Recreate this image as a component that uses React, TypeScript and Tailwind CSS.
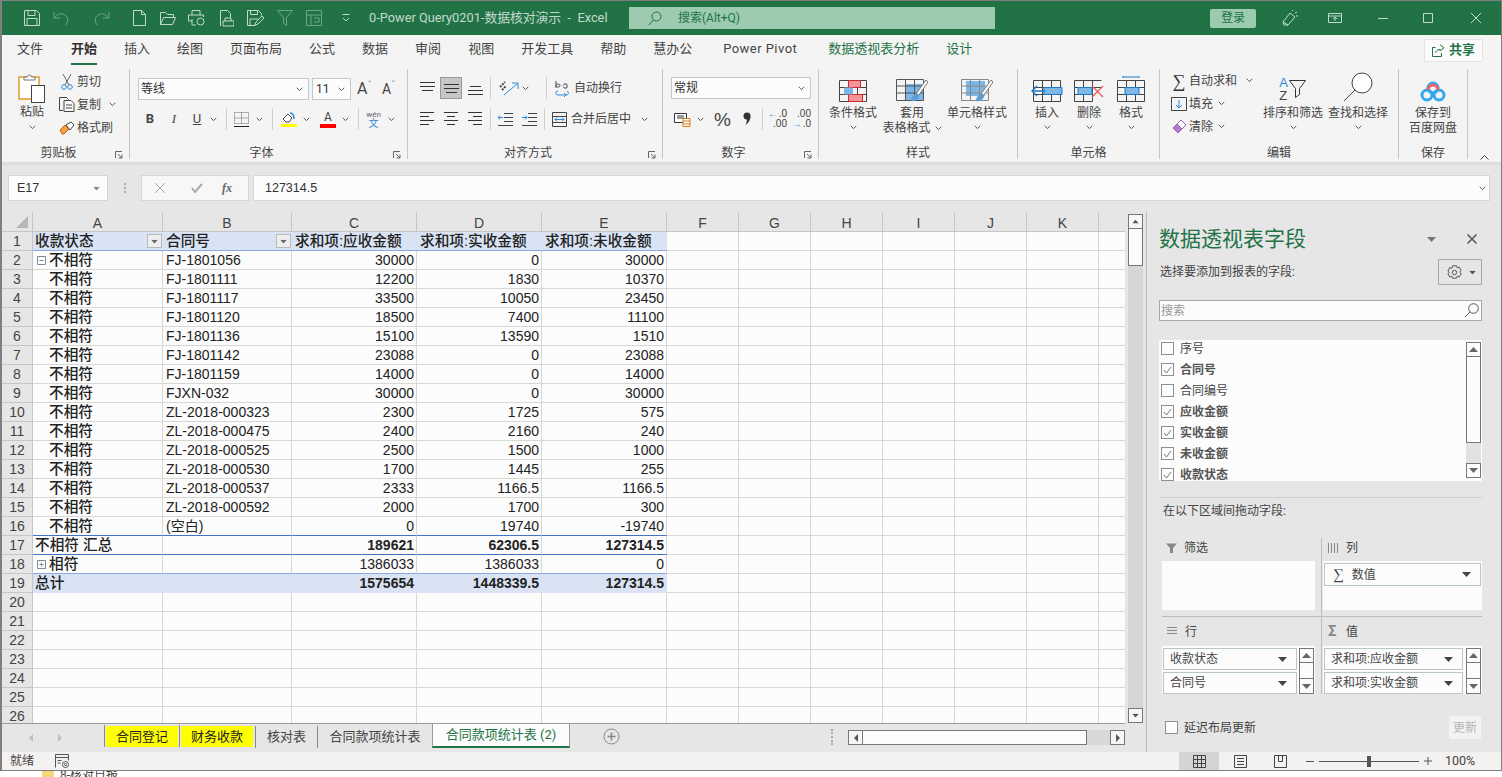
import React from 'react'

const Icon = ({ w, h, className = '', children }: { w: number; h: number; className?: string; children: React.ReactNode }) => (
  <svg width={w} height={h} viewBox={`0 0 ${w} ${h}`} fill="none" stroke="currentColor" strokeWidth="1" className={`shrink-0 ${className}`}>
    {children}
  </svg>
)

const Chev = ({ className = '' }: { className?: string }) => (
  <Icon w={7} h={5} className={`text-[#555] ${className}`}>
    <path d="M.7.8l2.8 2.8L6.3.8" />
  </Icon>
)

const Tri = ({ className = '' }: { className?: string }) => (
  <svg width="9" height="5" viewBox="0 0 9 5" className={`shrink-0 ${className}`}>
    <path d="M0 0h9L4.5 5z" fill="currentColor" />
  </svg>
)

/* ---------- title bar ---------- */

const TitleBar = () => (
  <div className="h-[34px] bg-[#217346] flex items-center text-[#c3d9cd] shrink-0">
    <Icon w={16} h={16} className="ml-[22px]"><path d="M.5.5h12l3 3v12H.5zM4 .5v5h7v-5M3 15.5v-7h10v7" /></Icon>
    <Icon w={17} h={15} className="ml-[13px] text-[#6ea58a]"><path d="M1 1v6h6M1.5 7C4 3 8 2 11 3.500c4 2 5 6 2 10.500" /></Icon>
    <Chev className="ml-[7px] text-[#6ea58a]" />
    <Icon w={17} h={15} className="ml-[9px] text-[#6ea58a]"><path d="M16 1v6h-6M15.500 7C13 3 9 2 6 3.500c-4 2-5 6-2 10.500" /></Icon>
    <Chev className="ml-[6px] text-[#6ea58a]" />
    <Icon w={13} h={16} className="ml-[10px]"><path d="M.5.500h8l4 4v11H.5zM8.500.500v4h4" /></Icon>
    <Icon w={16} h={13} className="ml-[14px]"><path d="M.5 12.500V.5h5l2 2h6v3M.5 12.500l3-7h12l-3 7z" /></Icon>
    <Icon w={17} h={16} className="ml-[12px]"><path d="M4 5V.5h8V5M4 11H.5V5h15v2M4 9v6h4" /><circle cx="12.500" cy="11.500" r="3.500" /></Icon>
    <Icon w={14} h={17} className="ml-[15px]"><path d="M.5 16V.5h7l3 3v4M3 16h11v-5H3zM5 11V8h6v3" /></Icon>
    <Icon w={17} h={16} className="ml-[13px]"><path d="M.5.500h11l3 3v2M.5.500v15h8M3.500.500v4h7v-4M3 15V9h8M8 15l1-3 6-6 2 2-6 6z" /></Icon>
    <Icon w={16} h={16} className="ml-[13px] text-[#6ea58a]"><path d="M.5.500h15l-6 7v8l-3-2v-6z" /></Icon>
    <Icon w={16} h={16} className="ml-[13px] text-[#6ea58a]"><path d="M.5.500h15v15H.5zM.5 5h15M5 5v10.500M8 8h5v4M8 12h5" /></Icon>
    <Icon w={8} h={8} className="ml-[20px]"><path d="M.5.500h7M1 4l3 3 3-3" /></Icon>
    <span className="ml-[19px] w-[260px] text-[12.800px] whitespace-nowrap">0-Power Query0201-数据核对演示&nbsp;&nbsp;-&nbsp;&nbsp;Excel</span>
    <div className="w-[366px] h-[22px] bg-[#9ccbb0] flex items-center text-[#217346]">
      <Icon w={14} h={15} className="ml-[19px]"><circle cx="8.500" cy="5.500" r="4.500" /><path d="M5.500 9L.8 14" /></Icon>
      <span className="ml-[16px] text-[12px]">搜索(Alt+Q)</span>
    </div>
    <div className="ml-[215px] w-[46px] h-[19px] rounded-[2px] bg-[#9ccbb0] text-[#217346] text-[12px] flex items-center justify-center">登录</div>
    <Icon w={16} h={16} className="ml-[26px]"><path d="M1 12L8 3l5 4-7 8zM1 12l1 3 4 0M10 1l1-1M13 3l2-1M14 6h2" /></Icon>
    <Icon w={14} h={10} className="ml-[30px]"><path d="M.5.500h13v9H.5zM.5 3h13M7 8V4.500M5 6l2-2 2 2" /></Icon>
    <Icon w={10} h={1} className="ml-[36px]"><path d="M0 .5h10" /></Icon>
    <Icon w={10} h={10} className="ml-[35px]"><path d="M.5.500h9v9h-9z" /></Icon>
    <Icon w={10} h={10} className="ml-[38px]"><path d="M0 0l10 10M10 0L0 10" /></Icon>
  </div>
)

/* ---------- ribbon tabs ---------- */

const tabs = ['文件', '开始', '插入', '绘图', '页面布局', '公式', '数据', '审阅', '视图', '开发工具', '帮助', '慧办公']

const MenuTabs = () => (
  <div className="h-[30px] bg-[#f5f4f4] flex items-center pl-[15px] pb-[2px] gap-[27px] text-[13px] text-[#444] shrink-0 relative">
    {tabs.map((t) => (
      <span key={t} className={t === '开始' ? 'relative font-bold text-[#333] ml-[1px]' : ''}>
        {t}
        {t === '开始' && <span className="absolute left-0 right-0 -bottom-[6px] h-[2px] bg-[#217346]" />}
      </span>
    ))}
    <span className="mx-[4px] tracking-[0.45px]">Power Pivot</span>
    <span className="text-[#217346]">数据透视表分析</span>
    <span className="text-[#217346]">设计</span>
    <div className="ml-auto mr-[18px] mt-[2px] w-[59px] h-[23px] bg-[#fbfbfb] border border-[#e3e3e3] rounded-[2px] flex items-center justify-center gap-[4px] text-[#217346] font-bold">
      <Icon w={13} h={13}><path d="M8 .8l4 3-4 3V5.500C5 5.500 4 7 3.500 9M.5 3.500h3M.5 3.500v9h9V9" /></Icon>
      <span>共享</span>
    </div>
  </div>
)

/* ---------- ribbon groups ---------- */

const Launcher = () => (
  <Icon w={8} h={8} className="text-[#666]"><path d="M.5 7V.5H7M3 3l4 4M7 3.500V7H3.500" /></Icon>
)

const Group = ({ w, label, launcher, children }: { w: string; label: string; launcher?: boolean; children: React.ReactNode }) => (
  <div className={`${w} h-[90px] mt-[4px] border-r border-[#c6c6c6] flex flex-col shrink-0`}>
    <div className="h-[76px] flex">{children}</div>
    <div className="h-[14px] flex items-center text-[12px] text-[#444] pt-[2px]">
      <span className="flex-1 text-center">{label}</span>
      {launcher && <span className="w-[14px] flex pt-[4px]"><Launcher /></span>}
    </div>
  </div>
)

const BigBtn = ({ w, icon, lines, chevRight }: { w: string; icon: React.ReactNode; lines: string[]; chevRight?: boolean }) => (
  <div className={`${w} flex flex-col items-center text-[12px] text-[#444] shrink-0`}>
    <div className="h-[37px] flex items-end pb-[4px] pt-[4px]">{icon}</div>
    {lines.map((l, i) => (
      <div key={l} className="h-[15px] leading-[15px] whitespace-nowrap flex items-center">
        {l}
        {chevRight && i === lines.length - 1 && <Chev className="ml-[4px]" />}
      </div>
    ))}
    {!chevRight && lines.length === 1 && <Chev className="mt-[4px]" />}
  </div>
)

const Sep = ({ className = '' }: { className?: string }) => <span className={`w-px h-[22px] bg-[#d0d0d0] shrink-0 ${className}`} />

const Select = ({ w, text }: { w: string; text: string }) => (
  <div className={`${w} h-[22px] bg-[#fcfcfc] border border-[#c2c8cb] flex items-center justify-between pl-[2px] pr-[5px] text-[12px] text-[#333] shrink-0`}>
    <span>{text}</span>
    <Chev />
  </div>
)

const SmallRow = ({ icon, text, chev, chevMl = 'ml-[8px]' }: { icon: React.ReactNode; text: string; chev?: boolean; chevMl?: string }) => (
  <div className="h-[23px] flex items-center text-[12px] text-[#444]">
    <span className="w-[18px] flex justify-center shrink-0">{icon}</span>
    <span className="ml-[1px] whitespace-nowrap">{text}</span>
    {chev && <Chev className={chevMl} />}
  </div>
)

const Lines = ({ v }: { v: 'top' | 'mid' | 'bot' | 'left' | 'center' | 'right' }) => {
  const d = {
    top: 'M0 1.500h15M0 5.500h15M2 9.500h11',
    mid: 'M0 3.500h15M0 7.500h15M2 11.500h11',
    bot: 'M2 5.500h11M0 9.500h15M0 13.500h15',
    left: 'M0 .5h14M0 4.500h9M0 8.500h14M0 12.500h9',
    center: 'M0 .5h14M3 4.500h8M0 8.500h14M3 12.500h8',
    right: 'M0 .5h14M5 4.500h9M0 8.500h14M5 12.500h9',
  }[v]
  return <Icon w={15} h={15} className="text-[#333]"><path d={d} /></Icon>
}

const Ribbon = () => (
  <div className="h-[97px] bg-[#f5f4f4] flex shrink-0 relative">
    {/* clipboard */}
    <Group w="w-[128px]" label="剪贴板" launcher>
      <div className="w-[50px] ml-[5px] flex flex-col items-center text-[12px] text-[#444] shrink-0">
        <svg width="28" height="30" viewBox="0 0 28 30" fill="none" className="mt-[4px]">
          <rect x="1" y="4" width="20" height="22" fill="#fff" stroke="#e39a2d" strokeWidth="1.500" />
          <path d="M6 7V4h3.500a2 2 0 0 1 4 0H17v3z" fill="#fff" stroke="#777" />
          <rect x="13.500" y="12.500" width="13" height="17" fill="#fff" stroke="#444" />
        </svg>
        <span className="mt-[2px] leading-[15px] h-[15px]">粘贴</span>
        <Chev className="mt-[5px]" />
      </div>
      <div className="ml-[1px] flex flex-col pt-[1px]">
        <SmallRow text="剪切" icon={
          <svg width="12" height="17" viewBox="0 0 12 17" fill="none"><path d="M2 1l6 11M10 1L4 12" stroke="#666" /><circle cx="3" cy="14" r="2.300" stroke="#2b88d8" /><circle cx="9" cy="14" r="2.300" stroke="#2b88d8" /></svg>
        } />
        <SmallRow text="复制" chev chevMl="ml-[8px]" icon={
          <svg width="16" height="15" viewBox="0 0 16 15" fill="none"><path d="M4 13.500H.5V.5h7l2 2" stroke="#444" /><path d="M5 3.500h7l3 3v8H5zM7 8h6M7 11h6" fill="#fbfbfb" stroke="#444" /></svg>
        } />
        <SmallRow text="格式刷" icon={
          <svg width="16" height="14" viewBox="0 0 16 14" fill="none"><path d="M1 9l5-5 4 4-5 5H3z" fill="#f0a04b" stroke="#c8650c" /><path d="M7 4l5-3 3 3-4 5z" fill="#fff" stroke="#444" /></svg>
        } />
      </div>
    </Group>

    {/* font */}
    <Group w="w-[278px]" label="字体" launcher>
      <div className="flex flex-col pt-[9px] pl-[8px]">
        <div className="flex items-center">
          <Select w="w-[171px]" text="等线" />
          <div className="w-[39px] h-[22px] ml-[3px] bg-[#fcfcfc] border border-[#c2c8cb] flex items-center justify-between pl-[3px] pr-[5px] text-[12px] text-[#333]">11<Chev /></div>
          <span className="ml-[6px] w-[18px] text-[16px] leading-[22px] text-[#444] flex">A<span className="text-[9px] leading-[14px] text-[#2b88d8]">ˆ</span></span>
          <span className="ml-[7px] w-[16px] text-[14px] leading-[22px] text-[#444] flex">A<span className="text-[9px] leading-[14px] text-[#2b88d8]">ˇ</span></span>
        </div>
        <div className="mt-[8px] h-[22px] flex items-center text-[#444] text-[13px]">
          <b className="ml-[7px] w-[10px] text-center">B</b>
          <i className="ml-[14px] w-[10px] text-center font-['Liberation_Serif',serif]">I</i>
          <u className="ml-[13px] w-[10px] text-center">U</u>
          <Chev className="ml-[8px]" />
          <Sep className="ml-[9px]" />
          <svg width="15" height="15" viewBox="0 0 15 15" fill="none" className="ml-[7px] shrink-0"><path d="M.5.500h14v11H.5zM7.500.500v11M.5 6h14" stroke="#666" strokeDasharray="1 1" /><path d="M0 14.500h15" stroke="#222" /></svg>
          <Chev className="ml-[7px]" />
          <Sep className="ml-[9px]" />
          <svg width="16" height="16" viewBox="0 0 16 16" fill="none" className="ml-[8px] shrink-0"><path d="M2 8l5-5 4 4-3 4H5z" stroke="#444" fill="#fff" /><path d="M9 2c3 0 4 3 4 6" stroke="#2b88d8" strokeWidth="1.500" /><path d="M0 13h16v3H0z" fill="#ffff00" /></svg>
          <Chev className="ml-[6px]" />
          <span className="ml-[10px] w-[16px] flex flex-col items-center text-[12px] leading-[12px]">A<span className="w-[16px] h-[4px] mt-[1px] bg-[#ff0000]" /></span>
          <Chev className="ml-[6px]" />
          <Sep className="ml-[9px]" />
          <span className="ml-[8px] w-[13px] flex flex-col items-center leading-[9px] text-[8px] text-[#666]">wén<span className="text-[10px] text-[#2b88d8]">文</span></span>
          <Chev className="ml-[8px]" />
        </div>
      </div>
    </Group>

    {/* alignment */}
    <Group w="w-[255px]" label="对齐方式" launcher>
      <div className="flex flex-col pt-[8px] pl-[12px]">
        <div className="h-[22px] flex items-center">
          <Lines v="top" />
          <span className="ml-[5px] w-[22px] h-[22px] bg-[#c6c6c6] border border-[#999] flex items-center justify-center"><Lines v="mid" /></span>
          <span className="ml-[6px] flex"><Lines v="bot" /></span>
          <Sep className="ml-[7px]" />
          <svg width="22" height="18" viewBox="0 0 22 18" fill="none" className="ml-[7px] shrink-0"><path d="M2 8l5-5M4 11l4-4" stroke="#444" strokeWidth="2" strokeDasharray="2 1" /><path d="M6 16l13-11M14 4h6v6" stroke="#2b88d8" /></svg>
          <Chev className="ml-[2px]" />
          <Sep className="ml-[17px]" />
          <svg width="18" height="17" viewBox="0 0 18 17" fill="none" className="ml-[8px] shrink-0"><path d="M1 1v7M1 5.500c1-2 4-2 4 0s-3 2-4 0M8 5.500c1-2 3-2 4-1v3c-1 1-3 1-4-1" stroke="#444" /><path d="M3 11c-3 0-3 4 0 4h8c3 0 3-3 1-4M9 13l2 2-2 2" stroke="#2b88d8" /></svg>
          <span className="ml-[1px] text-[12px] text-[#444] whitespace-nowrap">自动换行</span>
        </div>
        <div className="mt-[9px] h-[22px] flex items-center">
          <Lines v="left" />
          <span className="ml-[9px] flex"><Lines v="center" /></span>
          <span className="ml-[9px] flex"><Lines v="right" /></span>
          <Sep className="ml-[7px]" />
          <svg width="15" height="13" viewBox="0 0 15 13" fill="none" className="ml-[7px] shrink-0"><path d="M6 .5h9M6 4.500h9M6 8.500h9M0 12.500h15M0 .5h0" stroke="#444" /><path d="M5 4.500H0M2 2.500l-2 2 2 2" stroke="#2b88d8" /></svg>
          <svg width="15" height="13" viewBox="0 0 15 13" fill="none" className="ml-[9px] shrink-0"><path d="M6 .5h9M6 4.500h9M6 8.500h9M0 12.500h15" stroke="#444" /><path d="M0 4.500h5M3 2.500l2 2-2 2" stroke="#2b88d8" /></svg>
          <Sep className="ml-[7px]" />
          <svg width="15" height="15" viewBox="0 0 15 15" fill="none" className="ml-[7px] shrink-0"><path d="M.5.500h14v14H.5z" stroke="#444" /><path d="M.5 4.500h14M.5 10.500h14" stroke="#444" /><path d="M3 7.500h9M5 5.500l-2 2 2 2M10 5.500l2 2-2 2" stroke="#2b88d8" /></svg>
          <span className="ml-[4px] text-[12px] text-[#444] whitespace-nowrap">合并后居中</span>
          <Chev className="ml-[10px]" />
        </div>
      </div>
    </Group>

    {/* number */}
    <Group w="w-[156px]" label="数字" launcher>
      <div className="flex flex-col pt-[8px] pl-[8px]">
        <Select w="w-[140px]" text="常规" />
        <div className="mt-[9px] h-[22px] flex items-center text-[#444]">
          <svg width="17" height="15" viewBox="0 0 17 15" fill="none" className="ml-[3px] shrink-0"><path d="M.5 1.500h12v9H.5z" stroke="#333" fill="#fff" /><path d="M3 6h7M3 4h7" stroke="#333" /><path d="M9 6.500h7v8H9zM9 9h7M9 12h7" fill="#fff" stroke="#d67b1c" /></svg>
          <Chev className="ml-[6px]" />
          <span className="ml-[10px] text-[19px] leading-none w-[17px] font-['Liberation_Sans',sans-serif]">%</span>
          <svg width="8" height="14" viewBox="0 0 8 14" className="ml-[12px] shrink-0"><circle cx="4" cy="4" r="3.500" fill="#333" /><path d="M7.500 4c0 4-2 7-5 9 1-3 2-5 1-6z" fill="#333" /></svg>
          <Sep className="ml-[11px]" />
          <span className="ml-[7px] w-[17px] flex flex-col text-[10px] leading-[10px] font-['Liberation_Sans',sans-serif] items-end"><span className="flex items-center text-[#333]"><span className="text-[#2b88d8] mr-[1px] font-bold">←</span>.0</span><span>.00</span></span>
          <span className="ml-[7px] w-[17px] flex flex-col text-[10px] leading-[10px] font-['Liberation_Sans',sans-serif] items-end"><span>.00</span><span className="flex items-center"><span className="text-[#2b88d8] mr-[1px] font-bold">→</span>.0</span></span>
        </div>
      </div>
    </Group>

    {/* styles */}
    <Group w="w-[199px]" label="样式">
      <BigBtn w="w-[60px] ml-[4px]" lines={['条件格式']} icon={
        <svg width="28" height="22" viewBox="0 0 28 22" fill="none" className="shrink-0">
          <path d="M.5.500h27v21H.5zM.5 7.500h27M.5 14.500h27M9.500.500v21M18.500.500v21" stroke="#444" />
          <path d="M9.500.500h12v7h-12zM9.500 14.500h14v7h-14z" fill="#f7939b" stroke="#c92a2a" />
          <path d="M5 7.500h9v7H5z" fill="#7db7e8" />
        </svg>
      } />
      <BigBtn w="w-[60px] -ml-[1px]" chevRight lines={['套用', '表格格式']} icon={
        <svg width="32" height="24" viewBox="0 0 32 24" fill="none" className="shrink-0">
          <path d="M10 6h18v16H10z" fill="#7db7e8" />
          <path d="M.5 1.500h27v21H.5zM.5 8h27M.5 15h27M9.500 1.500v21M18.500 1.500v21" stroke="#555" />
          <path d="M20 16l10-14 2 2-9 13z" fill="#fff" stroke="#777" />
          <path d="M15 23c0-4 3-7 6-6l2 1c0 3-4 6-8 5z" fill="#5d9fd6" />
        </svg>
      } />
      <BigBtn w="w-[72px] -ml-[1px]" lines={['单元格样式']} icon={
        <svg width="32" height="24" viewBox="0 0 32 24" fill="none" className="shrink-0">
          <path d="M5 3h19v15H5z" fill="#7db7e8" />
          <path d="M.5 1.500h27v21H.5zM.5 8h27M.5 15h27M9.500 1.500v21M18.500 1.500v21" stroke="#888" />
          <path d="M20 16l10-14 2 2-9 13z" fill="#fff" stroke="#777" />
          <path d="M15 23c0-4 3-7 6-6l2 1c0 3-4 6-8 5z" fill="#5d9fd6" />
        </svg>
      } />
    </Group>

    {/* cells */}
    <Group w="w-[142px]" label="单元格">
      <BigBtn w="w-[42px] ml-[8px]" lines={['插入']} icon={
        <svg width="32" height="22" viewBox="0 0 32 22" fill="none" className="shrink-0">
          <path d="M2.500.5h27v21h-27zM2.500 7.500h27M2.500 14.500h27M11.500.5v21M20.500.5v21" stroke="#444" />
          <path d="M13 7.500h18v7H13z" fill="#7db7e8" stroke="#1f7ac8" />
          <path d="M1 11h13M6 6l-5 5 5 5" stroke="#1f7ac8" strokeWidth="1.500" fill="none" />
        </svg>
      } />
      <BigBtn w="w-[42px]" lines={['删除']} icon={
        <svg width="30" height="22" viewBox="0 0 30 22" fill="none" className="shrink-0">
          <path d="M.5.5h27M.5 21.500h18M.5 7.500h27M.5 14.500h18M.5.5v21M9.500.5v21M18.500.5v21" stroke="#444" />
          <path d="M4 7.500h14v7H4z" fill="#7db7e8" stroke="#1f7ac8" />
          <path d="M18 6l11 11M29 6L18 17" stroke="#ee5a5a" strokeWidth="1.300" />
        </svg>
      } />
      <BigBtn w="w-[42px]" lines={['格式']} icon={
        <svg width="28" height="26" viewBox="0 0 28 26" fill="none" className="shrink-0 -mt-[4px]">
          <path d="M6 1h16M6 0v2M22 0v2" stroke="#1f7ac8" />
          <path d="M.5 4.500h27v21H.5zM.5 11.500h27M.5 18.500h27M9.500 4.500v21M18.500 4.500v21" stroke="#444" />
          <path d="M8 11.500h14v7H8z" fill="#7db7e8" stroke="#1f7ac8" />
        </svg>
      } />
    </Group>

    {/* editing */}
    <Group w="w-[239px]" label="编辑">
      <div className="ml-[10px] w-[96px] flex flex-col text-[12px] shrink-0">
        <SmallRow text="自动求和" chev chevMl="ml-[9px]" icon={<span className="text-[18px] leading-none text-[#333] font-['Liberation_Serif',serif]">∑</span>} />
        <SmallRow text="填充" chev chevMl="ml-[5px]" icon={
          <svg width="16" height="14" viewBox="0 0 16 14" fill="none"><path d="M.5.500h15v13H.5z" stroke="#444" /><path d="M8 3v8M5 8l3 3 3-3" stroke="#2b88d8" /></svg>
        } />
        <SmallRow text="清除" chev chevMl="ml-[5px]" icon={
          <svg width="15" height="15" viewBox="0 0 15 15" fill="none"><path d="M1 9l8-8 5 5-8 8z" fill="#fff" stroke="#9c5fb5" /><path d="M1 9l4-4 5 5-4 4z" fill="#b57ccb" stroke="#9c5fb5" /></svg>
        } />
      </div>
      <BigBtn w="w-[62px] ml-[-4px]" lines={['排序和筛选']} icon={
        <div className="flex items-center text-[#444]">
          <span className="flex flex-col text-[13px] leading-[13px] font-['Liberation_Sans',sans-serif]"><span className="text-[#2b88d8]">A</span><span>Z</span></span>
          <Icon w={18} h={18} className="ml-[1px] text-[#333]"><path d="M.5.5h16l-6 8v6l-4 3V8.500z" /></Icon>
        </div>
      } />
      <BigBtn w="w-[62px] ml-[3px]" lines={['查找和选择']} icon={
        <Icon w={30} h={30} className="text-[#444] -mt-[3px]"><circle cx="19" cy="11" r="10" fill="#fff" /><path d="M12 18L1 29" /></Icon>
      } />
    </Group>

    {/* save */}
    <Group w="w-[69px]" label="保存">
      <BigBtn w="w-[68px]" lines={['保存到', '百度网盘']} icon={
        <svg width="28" height="21" viewBox="0 0 28 21" fill="none" className="shrink-0">
          <circle cx="8" cy="14" r="5" stroke="#31a8f0" strokeWidth="3" />
          <circle cx="20" cy="14" r="5" stroke="#31a8f0" strokeWidth="3" />
          <circle cx="14" cy="7" r="5" stroke="#31a8f0" strokeWidth="3" />
          <path d="M9 9a5 5 0 0 1 10 0" stroke="#f0606b" strokeWidth="3" />
        </svg>
      } />
    </Group>
    <Icon w={9} h={5} className="ml-[12px] mt-[90px] text-[#444]"><path d="M.5 4.500l4-4 4 4" /></Icon>
  </div>
)

/* ---------- formula bar ---------- */

const FormulaBar = () => (
  <div className="h-[50px] bg-[#e6e6e6] border-t-[3px] border-[#dedede] flex pt-[10px] pl-[6px] pr-[11px] shrink-0 font-['Liberation_Sans','Noto_Sans_CJK_SC',sans-serif]">
    <div className="w-[100px] h-[26px] bg-[#fcfcfc] border border-[#d6d6d6] flex items-center justify-between pl-[8px] pr-[6px] text-[12.500px] text-[#333]">E17<Tri className="text-[#888] scale-75" /></div>
    <span className="w-[33px] h-[26px] flex flex-col items-center justify-center gap-[2px]">
      <span className="w-[2px] h-[2px] bg-[#aaa]" /><span className="w-[2px] h-[2px] bg-[#aaa]" /><span className="w-[2px] h-[2px] bg-[#aaa]" />
    </span>
    <div className="w-[108px] h-[26px] bg-[#f7f7f7] border border-[#d6d6d6] flex items-center text-[#aaa]">
      <Icon w={10} h={10} className="ml-[13px]"><path d="M0 0l10 10M10 0L0 10" /></Icon>
      <Icon w={12} h={10} className="ml-[26px]"><path d="M1 5l3 4 7-8" strokeWidth="2" /></Icon>
      <i className="ml-[19px] text-[12px] text-[#666] font-['Liberation_Serif',serif] font-bold">fx</i>
    </div>
    <div className="ml-[4px] flex-1 h-[26px] bg-[#fcfcfc] border border-[#d6d6d6] flex items-center justify-between pl-[11px] pr-[3px] text-[12.500px] text-[#333]">127314.5<Chev /></div>
  </div>
)

/* ---------- sheet ---------- */

type Row = { a?: string; b?: string; c?: string; d?: string; e?: string; kind?: 'body' | 'sub' | 'plus' | 'total' | 'last'; box?: '-' | '+' }

const rows: Row[] = [
  { a: '不相符', box: '-', b: 'FJ-1801056', c: '30000', d: '0', e: '30000' },
  { a: '不相符', b: 'FJ-1801111', c: '12200', d: '1830', e: '10370' },
  { a: '不相符', b: 'FJ-1801117', c: '33500', d: '10050', e: '23450' },
  { a: '不相符', b: 'FJ-1801120', c: '18500', d: '7400', e: '11100' },
  { a: '不相符', b: 'FJ-1801136', c: '15100', d: '13590', e: '1510' },
  { a: '不相符', b: 'FJ-1801142', c: '23088', d: '0', e: '23088' },
  { a: '不相符', b: 'FJ-1801159', c: '14000', d: '0', e: '14000' },
  { a: '不相符', b: 'FJXN-032', c: '30000', d: '0', e: '30000' },
  { a: '不相符', b: 'ZL-2018-000323', c: '2300', d: '1725', e: '575' },
  { a: '不相符', b: 'ZL-2018-000475', c: '2400', d: '2160', e: '240' },
  { a: '不相符', b: 'ZL-2018-000525', c: '2500', d: '1500', e: '1000' },
  { a: '不相符', b: 'ZL-2018-000530', c: '1700', d: '1445', e: '255' },
  { a: '不相符', b: 'ZL-2018-000537', c: '2333', d: '1166.5', e: '1166.5' },
  { a: '不相符', b: 'ZL-2018-000592', c: '2000', d: '1700', e: '300' },
  { a: '不相符', b: '(空白)', c: '0', d: '19740', e: '-19740', kind: 'last' },
  { a: '不相符 汇总', c: '189621', d: '62306.5', e: '127314.5', kind: 'sub' },
  { a: '相符', box: '+', c: '1386033', d: '1386033', e: '0', kind: 'plus' },
  { a: '总计', c: '1575654', d: '1448339.5', e: '127314.5', kind: 'total' },
]

const cell = 'h-[19px] border-r border-b border-[#d8d8d2] overflow-hidden whitespace-nowrap leading-[18px]'
const gridCols = 'grid grid-cols-[31px_130px_129px_125px_125px_125px_72px_72px_72px_72px_72px_72px_26px]'
const letters = ['A', 'B', 'C', 'D', 'E', 'F', 'G', 'H', 'I', 'J', 'K', '']

const RowNo = ({ n }: { n: number }) => (
  <div className="h-[19px] bg-[#e6e6e6] border-r border-b border-[#c6c6c6] text-center text-[14px] leading-[19px] text-[#444]">{n}</div>
)

const Emptys = () => (
  <>
    {[0, 1, 2, 3, 4, 5].map((i) => <div key={i} className={cell} />)}
    <div className="h-[19px] border-b border-[#d8d8d2]" />
  </>
)

const FilterBtn = () => (
  <span className="w-[15px] h-[14px] ml-auto mr-[1px] bg-[#eeeeee] border border-[#b9b9b9] flex items-center justify-center text-[#666] shrink-0"><Tri className="scale-75" /></span>
)

const Box = ({ t }: { t: '-' | '+' }) => (
  <Icon w={9} h={9} className="text-[#7f8aa0] ml-[4px] mr-[3px]"><path d={t === '-' ? 'M.5.5h8v8h-8zM2.500 4.500h4' : 'M.5.5h8v8h-8zM2.500 4.500h4M4.500 2.500v4'} /></Icon>
)

const Sheet = () => (
  <div className="h-[511px] overflow-hidden bg-[#fcfcfc] text-[#222] font-['Liberation_Sans','Noto_Sans_CJK_SC',sans-serif]">
    <div className={gridCols}>
      <div className="h-[20px] bg-[#e6e6e6] border-r border-b border-[#c6c6c6] flex items-end justify-end pr-[4px] pb-[3px]">
        <svg width="12" height="12" viewBox="0 0 12 12"><path d="M12 0v12H0z" fill="#b8b8b8" /></svg>
      </div>
      {letters.map((l, i) => (
        <div key={i} className={`h-[20px] bg-[#e6e6e6] border-b border-[#c6c6c6] text-center text-[14px] leading-[22px] text-[#444] ${i < 11 ? 'border-r' : ''}`}>{l}</div>
      ))}

      <RowNo n={1} />
      <div className="h-[19px] bg-[#d9e3f3] border-b border-[#8ea9db] flex items-center pl-[2px] text-[14.670px] font-medium"><span>收款状态</span><FilterBtn /></div>
      <div className="h-[19px] bg-[#d9e3f3] border-b border-[#8ea9db] flex items-center pl-[3px] text-[14.670px] font-medium"><span>合同号</span><FilterBtn /></div>
      <div className="h-[19px] bg-[#d9e3f3] border-b border-[#8ea9db] flex items-center pl-[3px] text-[14.670px] font-medium whitespace-nowrap">求和项:应收金额</div>
      <div className="h-[19px] bg-[#d9e3f3] border-b border-[#8ea9db] flex items-center pl-[3px] text-[14.670px] font-medium whitespace-nowrap">求和项:实收金额</div>
      <div className="h-[19px] bg-[#d9e3f3] border-b border-[#8ea9db] flex items-center pl-[3px] text-[14.670px] font-medium whitespace-nowrap">求和项:未收金额</div>
      <Emptys />

      {rows.map((r, i) => {
        const line =
          r.kind === 'last' || r.kind === 'sub' ? 'border-b-[#4472c4]' : r.kind === 'plus' ? 'border-b-[#8ea9db]' : ''
        const bg = r.kind === 'total' ? 'bg-[#d9e3f3] border-r-[#d9e3f3] border-b-[#d9e3f3]' : ''
        const num = r.kind === 'sub' || r.kind === 'total' ? 'font-bold' : ''
        return (
          <React.Fragment key={i}>
            <RowNo n={i + 2} />
            <div className={`${cell} ${line} ${bg} flex items-center text-[14.670px] font-medium ${r.kind === 'sub' || r.kind === 'total' ? 'pl-[2px]' : r.box ? '' : 'pl-[16px]'}`}>
              {r.box && <Box t={r.box} />}
              {r.a}
            </div>
            <div className={`${cell} ${line} ${bg} pl-[3px] text-[14px]`}>{r.b}</div>
            <div className={`${cell} ${line} ${bg} ${num} pr-[2px] text-right text-[14px]`}>{r.c}</div>
            <div className={`${cell} ${line} ${bg} ${num} pr-[2px] text-right text-[14px]`}>{r.d}</div>
            <div className={`${cell} ${line} ${bg} ${num} pr-[2px] text-right text-[14px]`}>{r.e}</div>
            <Emptys />
          </React.Fragment>
        )
      })}

      {[20, 21, 22, 23, 24, 25, 26].map((n) => (
        <React.Fragment key={n}>
          <RowNo n={n} />
          <div className={cell} /><div className={cell} /><div className={cell} /><div className={cell} /><div className={cell} />
          <Emptys />
        </React.Fragment>
      ))}
    </div>
  </div>
)

const SheetTabs = () => (
  <div className="h-[29px] bg-[#e6e6e6] border-t border-[#9a9a9a] flex text-[13px] text-[#444] shrink-0">
    <span className="ml-[27px] mt-[10px] w-0 h-0 border-y-[4px] border-y-transparent border-r-[4px] border-r-[#c0c0c0]" />
    <span className="ml-[25px] mt-[10px] w-0 h-0 border-y-[4px] border-y-transparent border-l-[4px] border-l-[#c0c0c0]" />
    <div className="ml-[42px] h-[22px] mt-[1px] w-[74px] border-l border-[#888] pl-[1px] flex"><span className="flex-1 bg-[#ffff00] text-[#222] flex items-center justify-center mt-[1px]">合同登记</span></div>
    <div className="ml-[1px] h-[22px] mt-[1px] w-[76px] border-l border-[#888] pl-[1px] pr-[2px] flex"><span className="flex-1 bg-[#ffff00] text-[#222] flex items-center justify-center mt-[1px]">财务收款</span></div>
    <div className="h-[22px] mt-[2px] w-[62px] border-l border-[#888] flex items-center justify-center">核对表</div>
    <div className="h-[22px] mt-[2px] w-[115px] border-l border-[#888] flex items-center justify-center">合同款项统计表</div>
    <div className="h-[24px] w-[138px] bg-[#fcfcfc] border-x border-[#999] border-b-[2px] border-b-[#217346] text-[#217346] flex items-center justify-center">合同款项统计表 (2)</div>
    <Icon w={17} h={17} className="ml-[33px] mt-[4px] text-[#888]"><circle cx="8.500" cy="8.500" r="7.500" /><path d="M8.500 4.500v8M4.500 8.500h8" strokeWidth="1.500" /></Icon>
    <span className="ml-[211px] mt-[5px] h-[16px] w-[2px] border-l-2 border-dotted border-[#aaa]" />
    <div className="ml-[15px] mt-[6px] h-[15px] flex">
      <span className="w-[15px] bg-[#f5f5f5] border border-[#777] flex items-center justify-center"><span className="w-0 h-0 border-y-[4px] border-y-transparent border-r-[4px] border-r-[#555]" /></span>
      <span className="w-[224px] bg-[#fcfcfc] border-y border-r border-[#777]" />
      <span className="w-[23px] bg-[#d8d8d8]" />
      <span className="w-[15px] bg-[#f5f5f5] border border-[#777] flex items-center justify-center"><span className="w-0 h-0 border-y-[4px] border-y-transparent border-l-[4px] border-l-[#555]" /></span>
    </div>
  </div>
)

const VScroll = () => (
  <div className="w-[21px] bg-[#e6e6e6] pl-[3px] pt-[2px] shrink-0">
    <div className="w-[15px] h-[509px] bg-[#d6d6d6] flex flex-col">
      <span className="h-[15px] bg-[#f7f7f7] border border-[#777] flex items-center justify-center text-[#555]"><Tri className="rotate-180 scale-75" /></span>
      <span className="h-[37px] bg-[#fcfcfc] border-x border-b border-[#777]" />
      <span className="flex-1" />
      <span className="h-[15px] bg-[#f7f7f7] border border-[#777] flex items-center justify-center text-[#555]"><Tri className="scale-75" /></span>
    </div>
  </div>
)

/* ---------- pivot field panel ---------- */

const fields = [
  { name: '序号', on: false },
  { name: '合同号', on: true },
  { name: '合同编号', on: false },
  { name: '应收金额', on: true },
  { name: '实收金额', on: true },
  { name: '未收金额', on: true },
  { name: '收款状态', on: true },
]

const Check = ({ on }: { on: boolean }) => (
  <span className="w-[13px] h-[13px] bg-[#fcfcfc] border border-[#8f8f8f] flex items-center justify-center shrink-0">
    {on && <Icon w={9} h={8} className="text-[#777]"><path d="M1 4l2.500 3L8 1" /></Icon>}
  </span>
)

const MiniScroll = ({ className = '' }: { className?: string }) => (
  <div className={`w-[15px] h-[46px] bg-[#fcfcfc] flex flex-col text-[#666] shrink-0 ${className}`}>
    <span className="h-[15px] border border-[#777] flex items-center justify-center"><Tri className="rotate-180" /></span>
    <span className="h-[15px] border-x border-[#777]" />
    <span className="h-[16px] border border-[#777] flex items-center justify-center"><Tri /></span>
  </div>
)

const AreaItem = ({ text, sigma, className = '' }: { text: string; sigma?: boolean; className?: string }) => (
  <div className={`h-[23px] bg-[#fcfcfc] border border-[#b7c7c4] flex items-center pl-[6px] pr-[9px] text-[12px] text-[#444] ${className}`}>
    {sigma && <span className="ml-[2px] mr-[8px] text-[15px] leading-none font-['Liberation_Serif',serif]">∑</span>}
    <span>{text}</span>
    <Tri className="text-[#444] ml-auto" />
  </div>
)

const Panel = () => (
  <div className="flex-1 bg-[#e6e6e6] border-l border-[#b5bdbd] text-[#444] text-[12px] flex flex-col">
    <div className="mt-[14px] h-[26px] flex items-center pl-[12px] pr-[24px]">
      <span className="text-[21px] text-[#217346] leading-none">数据透视表字段</span>
      <Tri className="ml-auto mr-[31px] text-[#777]" />
      <Icon w={10} h={10} className="text-[#555]"><path d="M.5.500l9 9M9.500.500l-9 9" strokeWidth="1.500" /></Icon>
    </div>
    <div className="mt-[7px] h-[26px] flex items-center pl-[13px] pr-[19px]">
      <span>选择要添加到报表的字段:</span>
      <span className="ml-auto w-[44px] h-[26px] border border-[#a8a8a8] flex items-center justify-center gap-[6px] pl-[3px] text-[#555]">
        <Icon w={15} h={15}><path d="M5.500.8h4l.7 2 2-.7 2 3.400-1.600 1.500 1.600 1.500-2 3.400-2-.7-.7 2h-4l-.7-2-2 .7-2-3.400L2.400 7.500.8 6l2-3.400 2 .7z" /><circle cx="7.500" cy="7.500" r="2.200" /></Icon>
        <Tri className="scale-75" />
      </span>
    </div>
    <div className="mt-[15px] ml-[12px] mr-[19px] h-[21px] bg-[#fcfcfc] border border-[#a8a8a8] flex items-center justify-between pl-[1px] pr-[2px] text-[#999]">
      <span>搜索</span>
      <Icon w={15} h={15} className="text-[#555]"><circle cx="9.500" cy="5.500" r="4.800" /><path d="M6 9l-5 5" /></Icon>
    </div>
    <div className="mt-[19px] ml-[12px] mr-[19px] h-[141px] bg-[#fcfcfc] flex overflow-hidden">
      <div className="flex-1 flex flex-col pl-[2px] -mt-[2px]">
        {fields.map((f) => (
          <div key={f.name} className="h-[21px] shrink-0 flex items-center gap-[6px]">
            <Check on={f.on} />
            <span className={f.on ? 'font-bold text-[#555]' : ''}>{f.name}</span>
          </div>
        ))}
      </div>
      <div className="w-[15px] mr-[1px] mt-[2px] h-[136px] flex flex-col text-[#666]">
        <span className="h-[15px] border border-[#777] flex items-center justify-center"><Tri className="rotate-180" /></span>
        <span className="h-[86px] border-x border-b border-[#777]" />
        <span className="h-[20px] bg-[#e2e2e2]" />
        <span className="h-[15px] border border-[#777] flex items-center justify-center"><Tri /></span>
      </div>
    </div>
    <div className="mt-[16px] ml-[14px] mr-[19px] border-t border-dotted border-[#b5b5b5]" />
    <div className="mt-[6px] ml-[16px] h-[14px] leading-[14px]">在以下区域间拖动字段:</div>

    <div className="mt-[20px] ml-[15px] mr-[19px] grid grid-cols-[160px_1fr]">
      {/* filter */}
      <div className="h-[78px] border-r border-[#b8bfc2] pr-[6px]">
        <div className="h-[23px] flex items-center gap-[7px] pl-[4px] pb-[4px]">
          <Icon w={11} h={10} className="text-[#888]"><path d="M0 .5h11L7 5v5H4V5z" fill="currentColor" stroke="none" /></Icon>
          <span>筛选</span>
        </div>
        <div className="h-[49px] bg-[#fcfcfc]" />
      </div>
      {/* columns */}
      <div className="h-[78px] pl-[1px]">
        <div className="h-[23px] flex items-center gap-[8px] pl-[5px] pb-[4px]">
          <Icon w={10} h={10} className="text-[#888]"><path d="M.5 0v10M3.500 0v10M6.500 0v10M9.500 0v10" /></Icon>
          <span>列</span>
        </div>
        <div className="h-[49px] bg-[#fcfcfc] pt-[2px] px-[1px]">
          <AreaItem sigma text="数值" />
        </div>
      </div>
      {/* rows */}
      <div className="h-[78px] border-r border-t border-[#b8bfc2] pr-[6px]">
        <div className="h-[29px] flex items-center gap-[8px] pl-[5px]">
          <Icon w={10} h={9} className="text-[#888]"><path d="M0 .5h10M0 3.500h10M0 6.500h10" /></Icon>
          <span>行</span>
        </div>
        <div className="h-[48px] bg-[#fcfcfc] flex pt-[2px] pl-[1px] overflow-hidden">
          <div className="w-[134px] flex flex-col gap-[2px]">
            <AreaItem text="收款状态" />
            <AreaItem text="合同号" />
          </div>
          <MiniScroll className="ml-[2px]" />
        </div>
      </div>
      {/* values */}
      <div className="h-[78px] border-t border-[#b8bfc2] pl-[1px]">
        <div className="h-[29px] flex items-center gap-[8px] pl-[5px]">
          <span className="text-[15px] text-[#888] leading-none w-[10px] font-bold">Σ</span>
          <span>值</span>
        </div>
        <div className="h-[48px] bg-[#fcfcfc] flex pt-[2px] pl-[1px] overflow-hidden">
          <div className="w-[139px] flex flex-col gap-[2px]">
            <AreaItem text="求和项:应收金额" />
            <AreaItem text="求和项:实收金额" />
          </div>
          <MiniScroll className="ml-[3px]" />
        </div>
      </div>
    </div>

    <div className="mt-[22px] ml-[18px] mr-[20px] h-[23px] flex items-center">
      <Check on={false} />
      <span className="ml-[6px]">延迟布局更新</span>
      <span className="ml-auto w-[32px] h-[23px] bg-[#f2f2f2] text-[#b5b5b5] flex items-center justify-center">更新</span>
    </div>
  </div>
)

/* ---------- status bar ---------- */

const StatusBar = () => (
  <div className="h-[18px] bg-[#f4f1f1] flex items-center text-[12px] text-[#444] shrink-0">
    <span className="ml-[8px]">就绪</span>
    <Icon w={14} h={14} className="ml-[21px] text-[#555]"><path d="M.5 13.500V.5h13v6M.5 3.500h13M2.500 6.500h4M2.500 9h3" /><circle cx="10.500" cy="10.500" r="3" /><circle cx="10.500" cy="10.500" r="1" /></Icon>
    <div className="ml-auto w-[40px] h-[18px] bg-[#d4d4d4] flex items-center justify-center">
      <Icon w={13} h={13} className="text-[#444]"><path d="M.5.5h12v12H.5zM.5 4.500h12M.5 8.500h12M4.500.5v12M8.500.5v12" /></Icon>
    </div>
    <Icon w={13} h={13} className="ml-[15px] text-[#444]"><path d="M.5.5h12v12H.5zM3 3.500h7M3 6.500h7M3 9.500h7" /></Icon>
    <Icon w={13} h={13} className="ml-[27px] text-[#444]"><path d="M.5.5h12v12H.5zM4.500.5v6h4v-6" /></Icon>
    <Icon w={8} h={1} className="ml-[19px] text-[#555]"><path d="M0 .5h8" /></Icon>
    <div className="ml-[5px] w-[100px] h-[1px] bg-[#555] flex items-center justify-center"><span className="w-[4px] h-[11px] bg-[#555]" /></div>
    <Icon w={8} h={8} className="ml-[5px] text-[#555]"><path d="M0 4h8M4 0v8" /></Icon>
    <span className="ml-[13px] mr-[22px] w-[34px] text-[12.500px]">100%</span>
  </div>
)

export default function App() {
  return (
    <div className="w-[1502px] h-[777px] bg-white overflow-hidden flex flex-col font-['Roboto','Noto_Sans_CJK_SC',sans-serif]">
      <div className="h-[771px] border-t border-b border-l-2 border-r border-[#7f7f7f] flex flex-col shrink-0">
        <TitleBar />
        <MenuTabs />
        <Ribbon />
        <FormulaBar />
        <div className="h-[540px] flex shrink-0">
          <div className="w-[1123px] flex flex-col shrink-0">
            <Sheet />
            <SheetTabs />
          </div>
          <VScroll />
          <Panel />
        </div>
        <StatusBar />
      </div>
      <div className="h-[6px] overflow-hidden flex items-start pl-[42px] text-[12px] leading-[8px] text-[#444]">
        <span className="w-[12px] h-[6px] bg-[#f5d978]" />
        <span className="ml-[6px] whitespace-nowrap">8-核对日报</span>
      </div>
    </div>
  )
}
